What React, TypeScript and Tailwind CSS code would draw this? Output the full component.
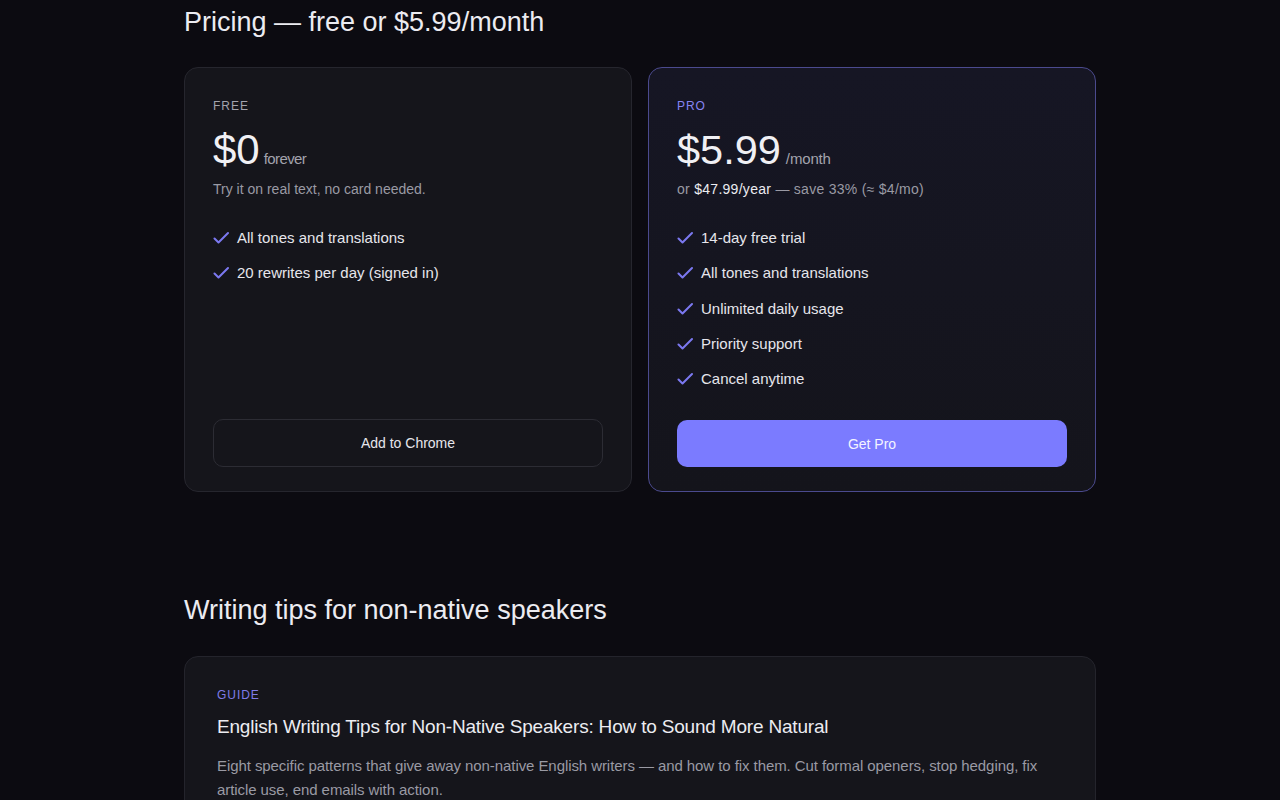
const freeFeatures = ['All tones and translations', '20 rewrites per day (signed in)']
const proFeatures = [
  '14-day free trial',
  'All tones and translations',
  'Unlimited daily usage',
  'Priority support',
  'Cancel anytime',
]

function CheckMark() {
  return (
    <svg viewBox="0 0 16 16" className="h-4 w-4 shrink-0" fill="none">
      <path d="M1.5 8.5 5.5 12.5 15 3" stroke="#7b78f0" strokeWidth={2} strokeLinecap="round" strokeLinejoin="round" />
    </svg>
  )
}

function FeatureList({ items }: { items: string[] }) {
  return (
    <ul className="mt-7 flex flex-col gap-[13.3px]">
      {items.map(item => (
        <li key={item} className="flex items-center gap-2 text-[15px] leading-[22px] text-[#e6e6ec]">
          <CheckMark />
          {item}
        </li>
      ))}
    </ul>
  )
}

export default function App() {
  return (
    <div
      className="min-h-screen bg-[#0c0b11] text-[#ececf1]"
      style={{ fontFamily: '"Liberation Sans", Arial, sans-serif' }}
    >
      <div className="mx-auto w-[912px] pt-[5px] pb-10">
        {/* pricing */}
        <h2 className="text-[27px] leading-[35px] font-normal text-[#ececf1]">
          Pricing — free or $5.99/month
        </h2>

        <div className="mt-[27px] grid grid-cols-2 gap-4">
          <div className="flex flex-col rounded-[14px] border border-[#26262e] bg-[#15151b] px-7 pt-[30px] pb-6">
            <p className="text-xs leading-4 tracking-[0.08em] text-[#a3a3ad]">FREE</p>
            <div className="mt-3 flex items-baseline gap-1">
              <span className="text-[42px] leading-[48px] text-[#f0f0f4]">$0</span>
              <span className="text-[15px] tracking-[-0.04em] text-[#a3a3ad]">forever</span>
            </div>
            <p className="mt-[5px] text-sm leading-5 text-[#9a9aa4]">Try it on real text, no card needed.</p>
            <FeatureList items={freeFeatures} />
            <button className="mt-auto h-12 w-full rounded-[10px] border border-[#2c2c34] bg-[#15151b] text-sm text-[#e6e6ec]">
              Add to Chrome
            </button>
          </div>

          <div className="flex flex-col rounded-[14px] border border-[#4b4a8e] bg-gradient-to-b from-[#161624] to-[#14141b] px-7 pt-[30px] pb-6">
            <p className="text-xs leading-4 tracking-[0.08em] text-[#8784f4]">PRO</p>
            <div className="mt-3 flex items-baseline gap-[5px]">
              <span className="text-[41.5px] leading-[48px] text-[#f0f0f4]">$5.99</span>
              <span className="text-[15px] tracking-[-0.01em] text-[#a3a3ad]">/month</span>
            </div>
            <p className="mt-[5px] text-sm leading-5 tracking-[0.02em] text-[#9a9aa4]">
              or <span className="text-[#ececf1]">$47.99/year</span> — save 33% (≈ $4/mo)
            </p>
            <FeatureList items={proFeatures} />
            <button className="mt-[30px] h-[47px] w-full rounded-[10px] bg-[#7b7bff] text-sm text-[#f4f4ff]">
              Get Pro
            </button>
          </div>
        </div>

        {/* tips */}
        <h2 className="mt-[101px] text-[27px] leading-[35px] font-normal text-[#ececf1]">
          Writing tips for non-native speakers
        </h2>

        <div className="mt-7 rounded-[14px] border border-[#24242c] bg-[#15151b] px-8 pt-[29px] pb-8">
          <p className="text-xs leading-[18px] tracking-[0.08em] text-[#7f7ce8]">GUIDE</p>
          <h3 className="mt-[9px] text-[19px] leading-7 tracking-[-0.01em] text-[#ececf1]">
            English Writing Tips for Non-Native Speakers: How to Sound More Natural
          </h3>
          <p className="mt-[13px] text-[15px] leading-6 tracking-[-0.005em] text-[#9a9aa4]">
            Eight specific patterns that give away non-native English writers — and how to fix them. Cut formal openers, stop hedging, fix article use, end emails with action.
          </p>
        </div>
      </div>
    </div>
  )
}
